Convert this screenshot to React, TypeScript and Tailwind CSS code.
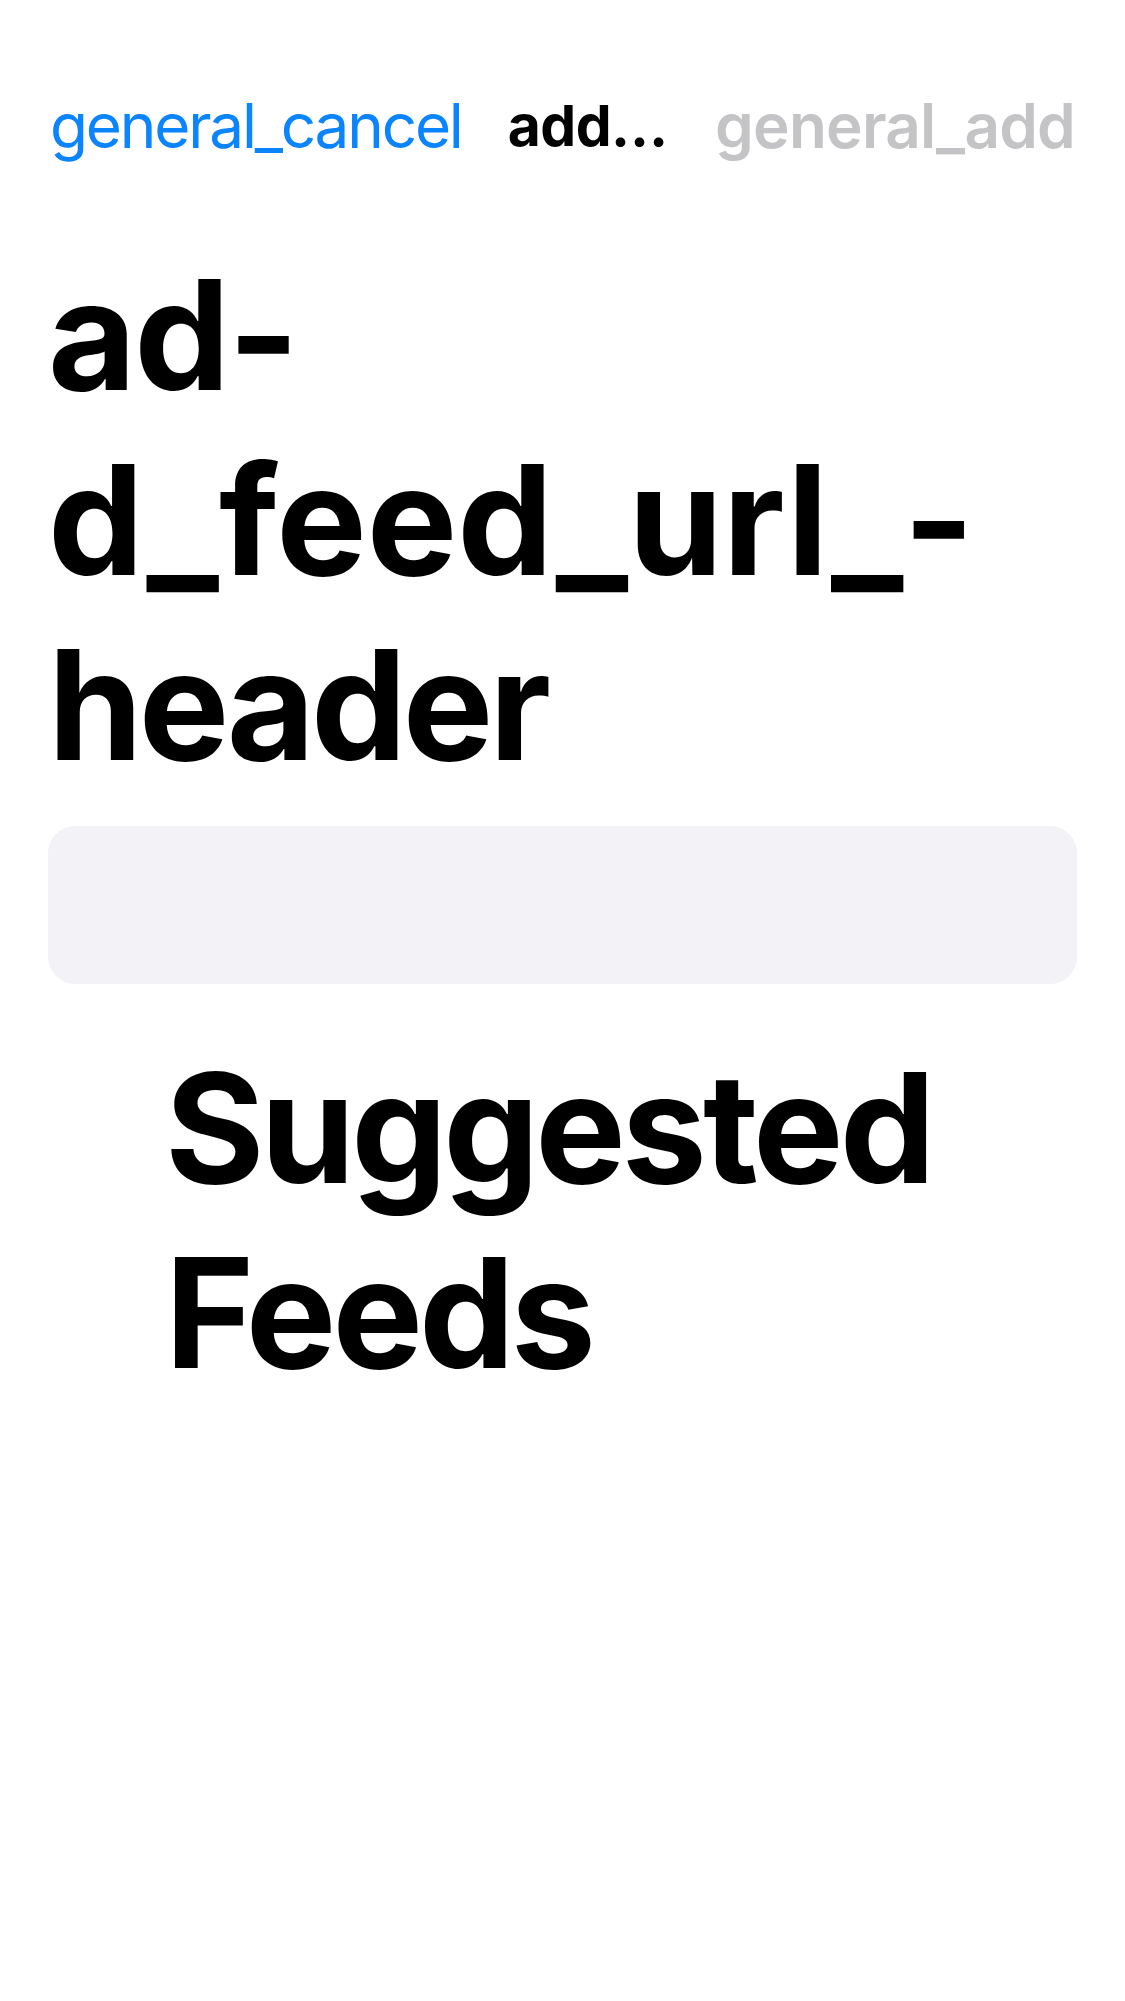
import React from "react";

export default function App() {
  return (
    <div
      className="min-h-[2001px] w-[1125px] bg-white text-black"
      style={{ fontFamily: 'Inter, "Noto Sans", sans-serif' }}
    >
      <div className="flex items-center pl-[50px] pr-[50px] pt-[86px] h-[166px]">
        <span className="text-[#0b84ff] text-[62px] leading-[80px] tracking-[-2.2px]">general_cancel</span>
        <span className="ml-[46px] font-bold text-[57px] leading-[80px] tracking-[-0.5px]">add…</span>
        <span className="ml-auto text-[#c4c4c6] text-[62px] leading-[80px] font-semibold tracking-[-0.8px]">general_add</span>
      </div>
      <h1 className="mt-[77px] pl-[48px] font-bold text-[152px] leading-[185px]">
        <span className="block tracking-[-2px]">ad-</span>
        <span className="block">d_feed_url_-</span>
        <span className="block tracking-[-4px]">header</span>
      </h1>
      <div className="mx-[48px] mt-[28px] h-[158px] rounded-[27px] bg-[#f2f2f7]" />
      <h2 className="mt-[52px] pl-[165px] pr-[48px] font-bold text-[152px] leading-[185px] tracking-[-4px]">
        Suggested Feeds
      </h2>
    </div>
  );
}
